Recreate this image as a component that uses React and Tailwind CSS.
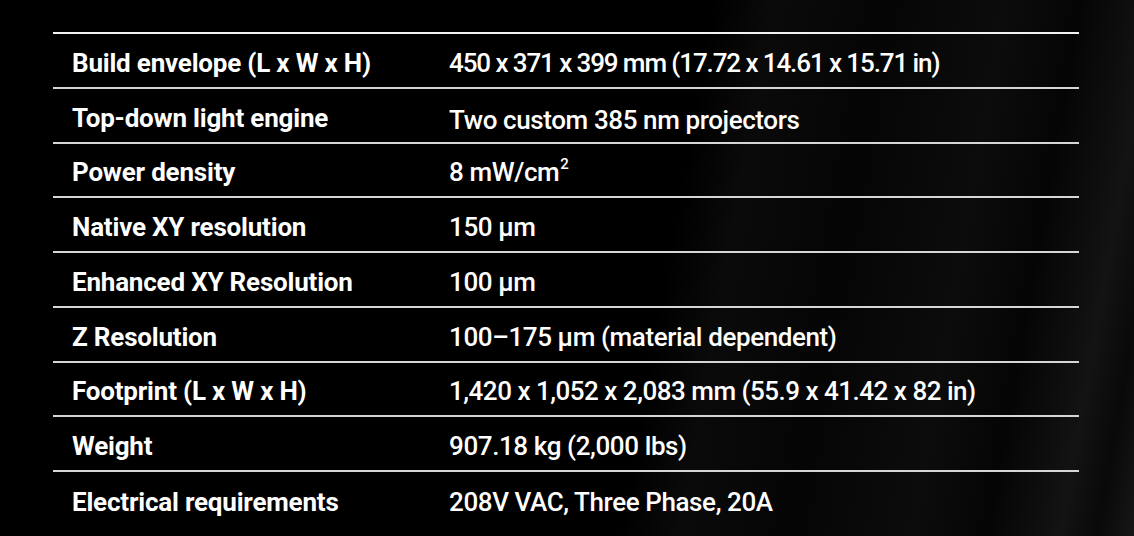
import React from 'react';

const specs = [
  { label: 'Build envelope (L x W x H)', value: '450 x 371 x 399 mm (17.72 x 14.61 x 15.71 in)', track: 'tracking-[-1.1px]' },
  { label: 'Top-down light engine', value: 'Two custom 385 nm projectors', shift: 'pt-[4px]' },
  { label: 'Power density', value: (<>8 mW/cm<sup className="text-[15px] relative -top-[2px] align-top leading-none ml-[1px]">2</sup></>) },
  { label: 'Native XY resolution', value: '150 µm' },
  { label: 'Enhanced XY Resolution', value: '100 µm' },
  { label: 'Z Resolution', value: '100–175 µm (material dependent)' },
  { label: 'Footprint (L x W x H)', value: '1,420 x 1,052 x 2,083 mm (55.9 x 41.42 x 82 in)', track: 'tracking-[-0.5px]' },
  { label: 'Weight', value: '907.18 kg (2,000 lbs)' },
  { label: 'Electrical requirements', value: '208V VAC, Three Phase, 20A', last: true },
];

const App = () => {
  return (
    <div className="w-[1134px] h-[536px] overflow-hidden bg-black bg-[linear-gradient(100deg,transparent_0%,transparent_58%,#0a0a0a_63%,#050505_72%,#0c0c0c_82%,#050505_88%,#131313_94%,#090909_97%,#171717_100%)] font-['Roboto',sans-serif] text-white">
      <div className="pt-[32px] pl-[53px]">
        <div className="w-[1026px] border-t-2 border-[#f2f2f2]">
          {specs.map((row, index) => (
            <div
              key={index}
              className={`flex h-[54.75px] pt-[5px] items-center pl-[19px] ${row.last ? '' : 'border-b-2 border-[#d6d6d6]'}`}
            >
              <div className="w-[377px] shrink-0 text-[26px] leading-none font-bold tracking-[-0.2px]">{row.label}</div>
              <div className={`text-[26px] leading-none font-medium ${row.track || 'tracking-[-0.4px]'} ${row.shift || ''}`}>{row.value}</div>
            </div>
          ))}
        </div>
      </div>
    </div>
  );
};

export default App;
